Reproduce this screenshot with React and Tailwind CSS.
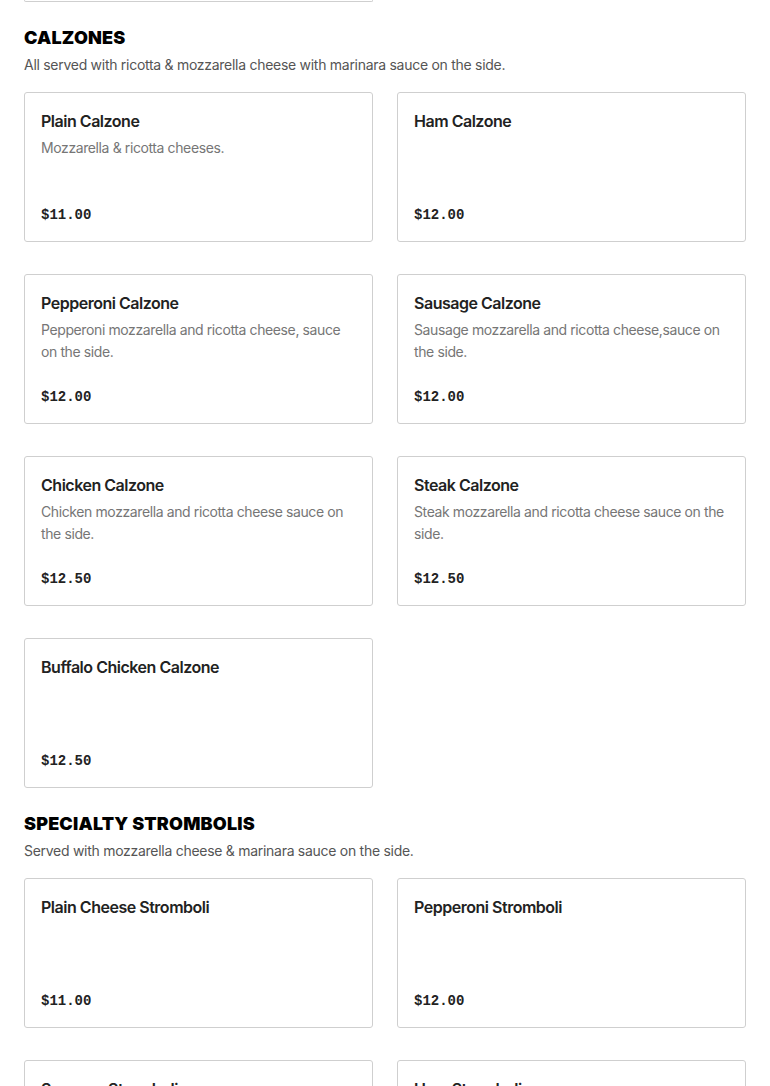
import React from 'react';

const sections = [
  {
    title: 'Calzones',
    note: 'All served with ricotta & mozzarella cheese with marinara sauce on the side.',
    items: [
      { name: 'Plain Calzone', desc: 'Mozzarella & ricotta cheeses.', price: '$11.00' },
      { name: 'Ham Calzone', desc: '', price: '$12.00' },
      { name: 'Pepperoni Calzone', desc: 'Pepperoni mozzarella and ricotta cheese, sauce on the side.', price: '$12.00' },
      { name: 'Sausage Calzone', desc: 'Sausage mozzarella and ricotta cheese,sauce on the side.', price: '$12.00' },
      { name: 'Chicken Calzone', desc: 'Chicken mozzarella and ricotta cheese sauce on the side.', price: '$12.50' },
      { name: 'Steak Calzone', desc: 'Steak mozzarella and ricotta cheese sauce on the side.', price: '$12.50' },
      { name: 'Buffalo Chicken Calzone', desc: '', price: '$12.50' },
    ],
  },
  {
    title: 'Specialty Strombolis',
    note: 'Served with mozzarella cheese & marinara sauce on the side.',
    items: [
      { name: 'Plain Cheese Stromboli', desc: '', price: '$11.00' },
      { name: 'Pepperoni Stromboli', desc: '', price: '$12.00' },
      { name: 'Sausage Stromboli', desc: '', price: '$12.00' },
      { name: 'Ham Stromboli', desc: '', price: '$12.00' },
    ],
  },
];

function MenuCard({ item }) {
  return (
    <div className="h-[150px] border border-[#cfcfcf] rounded-[3px] bg-white px-4 pt-4 pb-4 flex flex-col justify-between">
      <div>
        <h3 className="text-[16px] leading-6 font-semibold tracking-[-0.03em] text-[#222]">{item.name}</h3>
        {item.desc && (
          <p className="mt-1 text-[14px] leading-[22px] tracking-[-0.028em] text-[#767676]">{item.desc}</p>
        )}
      </div>
      <div className="font-['Liberation_Mono',monospace] font-bold text-[14px] leading-5 text-[#222]">
        {item.price}
      </div>
    </div>
  );
}

export default function App() {
  return (
    <div className="min-h-screen bg-white px-6 font-['Inter',sans-serif]">
      {/* tail of the previous section's last card */}
      <div className="w-[349px] h-[2px] border-x border-b border-[#cfcfcf] rounded-b-[3px]" />

      {sections.map((section) => (
        <section key={section.title} className="pt-[22px]">
          <h2 className="uppercase text-[18px] leading-7 font-black text-black tracking-[0.01em]">
            {section.title}
          </h2>
          <p className="mt-0.5 text-[14px] leading-[22px] tracking-[-0.02em] text-[#555]">{section.note}</p>
          <div className="mt-4 grid grid-cols-2 gap-x-6 gap-y-8">
            {section.items.map((item) => (
              <MenuCard key={item.name} item={item} />
            ))}
          </div>
        </section>
      ))}
    </div>
  );
}
